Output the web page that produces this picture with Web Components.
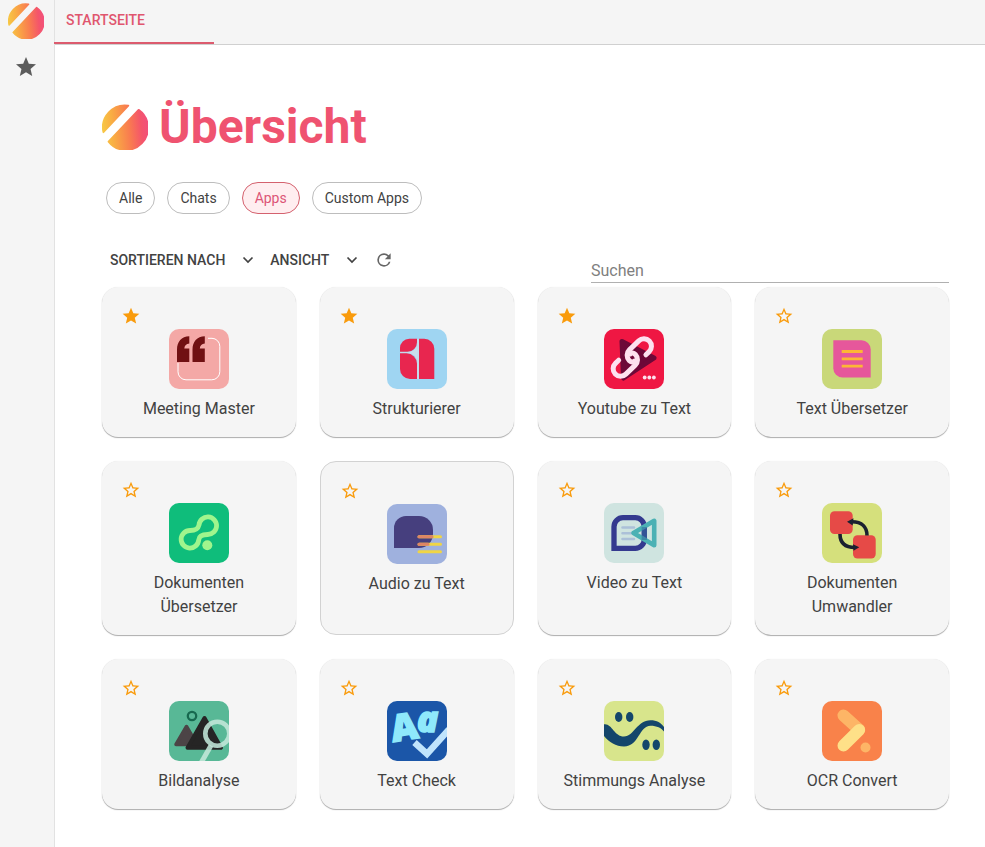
<!DOCTYPE html>
<html lang="de">
<head>
<meta charset="utf-8">
<title>Übersicht</title>
<style>
  html, body { margin: 0; min-height: 100%; }
  body { font-family: Roboto, "Liberation Sans", sans-serif; font-size: 16px; line-height: 24px; color: #424242; background: #fff; }
</style>
</head>
<body>
<app-shell>
  <side-bar slot="side"></side-bar>
  <tab-bar slot="top"><span>STARTSEITE</span></tab-bar>
  <page-title>Übersicht</page-title>
  <chip-row>
    <filter-chip>Alle</filter-chip>
    <filter-chip>Chats</filter-chip>
    <filter-chip selected>Apps</filter-chip>
    <filter-chip>Custom Apps</filter-chip>
  </chip-row>
  <tool-row>
    <menu-button>SORTIEREN NACH</menu-button>
    <menu-button>ANSICHT</menu-button>
    <refresh-button></refresh-button>
    <search-field slot="end" label="Suchen"></search-field>
  </tool-row>
  <card-grid>
    <app-card icon="meeting" favorite>Meeting Master</app-card>
    <app-card icon="struct" favorite>Strukturierer</app-card>
    <app-card icon="youtube" favorite>Youtube zu Text</app-card>
    <app-card icon="translate">Text Übersetzer</app-card>
    <app-card icon="docs">Dokumenten Übersetzer</app-card>
    <app-card icon="audio" outlined>Audio zu Text</app-card>
    <app-card icon="video">Video zu Text</app-card>
    <app-card icon="convert">Dokumenten Umwandler</app-card>
    <app-card icon="image">Bildanalyse</app-card>
    <app-card icon="check">Text Check</app-card>
    <app-card icon="mood">Stimmungs Analyse</app-card>
    <app-card icon="ocr">OCR Convert</app-card>
  </card-grid>
</app-shell>
<script>
const define = (name, render) => customElements.define(name, class extends HTMLElement {
  constructor() { super(); this.attachShadow({ mode: 'open' }); }
  connectedCallback() {
    this.shadowRoot.innerHTML = '<style>*{box-sizing:border-box}svg{display:block}button{font:inherit;color:inherit;background:none;border:0;padding:0;margin:0;cursor:pointer}</style>' + render(this);
  }
});

const STAR = 'M12 17.27 18.18 21l-1.64-7.03L22 9.24l-7.19-.61L12 2 9.19 8.63 2 9.24l5.46 4.73L5.82 21z';
const STAR_OUTLINE = 'M22 9.24l-7.19-.62L12 2 9.19 8.63 2 9.24l5.46 4.73L5.82 21 12 17.27 18.18 21l-1.63-7.03L22 9.24zM12 15.4l-3.76 2.27 1-4.28-3.32-2.88 4.38-.38L12 6.1l1.71 4.04 4.38.38-3.32 2.88 1 4.28L12 15.4z';

// Artwork of each app tile, on a 60 x 60 canvas: background colour, shapes clipped to the tile, lettering.
const ICONS = {
  meeting: ['#f4a8a6', `<path d="M39 9.3h4a8 8 0 0 1 7.8 8v25.500a8 8 0 0 1-8 8H17a8 8 0 0 1-8-8V34" fill="none" stroke="#fff" stroke-width="1"/>
    <g fill="#701012"><path d="M8 33V20.500C8 12.500 12.500 7.500 20.300 7.200v7.200c-3 .4-4.800 2-5 5h5V33z"/><path d="M23.500 33V20.500c0-8 4.500-13 12.300-13.300v7.200c-3 .4-4.800 2-5 5h5V33z"/></g>`],
  struct: ['#9fd5f2', `<path d="M20 23.500Q29 22.500 30.800 14V34Q29 24.500 20 23.500z" fill="#c9ddeb"/><path d="M13 23.500H25M31 10V50" stroke="#c4dcec" stroke-width="2"/>
    <g fill="#e8264f"><path d="M32 9.700h5.300a10 10 0 0 1 10 10V50H32z"/><path d="M13 22.700V19a9.300 9.300 0 0 1 9.300-9.300H30v3.500a9.500 9.500 0 0 1-9.500 9.500z"/><path d="M13 24.300h6.500A10.500 10.500 0 0 1 30 34.800V50h-7a10 10 0 0 1-10-10z"/></g>`],
  youtube: ['#ef1743', `<path d="M18 12.500 50 29 19.500 49z" fill="#6d0838" stroke="#6d0838" stroke-width="5" stroke-linejoin="round"/>
    <g transform="rotate(-44 28.300 28.500)" fill="none" stroke="#fde1ef" stroke-width="5" stroke-linecap="round"><path d="M40 36h4.500a7.500 7.500 0 0 0 0-15H31.500a7.500 7.500 0 0 0-7.500 7.500c0 2.500 1.500 4 3.300 4"/><path d="M16.600 21h-4.500a7.500 7.500 0 0 0 0 15h13a7.500 7.500 0 0 0 7.500-7.500c0-2.500-1.500-4-3.300-4"/></g>
    <g fill="#fde1ef"><circle cx="40.700" cy="48.500" r="1.900"/><circle cx="45.300" cy="48.500" r="1.900"/><circle cx="49.900" cy="48.500" r="1.900"/></g>`],
  translate: ['#c9d879', `<path d="M11.300 11.300h28.200a9.200 9.200 0 0 1 9.200 9.200v28H20.500a9.200 9.200 0 0 1-9.200-9.200z" fill="#e6579b"/><path d="M19.700 22.500h21M19.700 29.800h21M19.700 37.100h21" stroke="#fdb735" stroke-width="2.800"/>`],
  docs: ['#0fbd7b', `<path d="M30 22A8.800 8.800 0 1 1 38.700 31.500C33 31.500 30 33 29.700 37A8.800 8.800 0 1 1 21 27.500C26 27.500 29 26.500 30 22z" fill="none" stroke="#9ff58d" stroke-width="4.800"/><circle cx="38.300" cy="42.300" r="5" fill="#9ff58d"/>`],
  audio: ['#9fb1de', `<path d="M7 44V24a12 12 0 0 1 12-12h13a14 14 0 0 1 14 14v4a14 14 0 0 1-14 14z" fill="#463f7e"/>
    <g stroke-width="3" stroke-linecap="round"><path d="M32 32.700h21.500M32 40.300h21.500M32 47.700h21.500" stroke="#f0d544"/><path d="M32 32.700h13M32 40.300h9" stroke="#df8566"/></g>`],
  video: ['#cfe4e0', `<path d="M18.500 24.500H30M18.500 30.300H30M18.500 36H30" stroke="#abc0d8" stroke-width="2.600" stroke-linecap="round"/>
    <path d="M10 45.300V23.700a9 9 0 0 1 9-9h12.300a9 9 0 0 1 9 9v12.600a9 9 0 0 1-9 9z" fill="none" stroke="#343a8f" stroke-width="5.300"/>
    <path d="M29.500 30 50.200 17.800v24.400z" fill="none" stroke="#4bb1b4" stroke-width="4.600" stroke-linejoin="round"/><path d="M40.300 24v13" stroke="#33689c" stroke-width="5.300" opacity=".55"/>`],
  convert: ['#d5e07c', `<g fill="#e64a47"><rect x="8" y="8.300" width="22.700" height="22.700" rx="4.500"/><rect x="31" y="32.200" width="22.700" height="23.300" rx="4.500"/></g>
    <g fill="none" stroke="#1b2130" stroke-width="3.600"><path d="M45 32.500C45 24 40 18.800 30 18.800"/><path d="M18 31C18 39.500 23 44.500 33 44.500"/></g>
    <path d="M25 18.800 31.500 15.300 30.700 22.500z M37.300 44.300 31 41.300 31.500 47.700z" fill="#1b2130"/>`],
  image: ['#58b896', `<circle cx="23" cy="15" r="4.200" fill="none" stroke="#17694f" stroke-width="2.300"/>
    <path d="M7 43.500 17.500 25.500 28 43.500z" fill="#4c4446" stroke="#4c4446" stroke-width="3.500" stroke-linejoin="round"/><path d="M18.500 46.700 35.500 17 52 46.700z" fill="#262525" stroke="#262525" stroke-width="4" stroke-linejoin="round"/>
    <g fill="none" stroke="#c3e7da" stroke-opacity=".88"><circle cx="48.300" cy="32.700" r="12" stroke-width="4.600"/><path d="M42 44.500 32 62" stroke-width="5"/></g>`],
  check: ['#1b56a8', `<path d="M27.500 41.500 40 53 62 28.500" fill="none" stroke="#c0e4fc" stroke-width="6.500"/>`,
    `<g fill="#8fe9fb" stroke="#8fe9fb" stroke-width="1.500" font-family="Open Sans, sans-serif" font-weight="800"><text transform="translate(6 41) rotate(-9)" font-size="37">A</text><text x="30" y="31" font-size="35" font-style="italic">a</text></g>`],
  mood: ['#d8e58c', `<path d="M0 23.300C8 22 10 35.500 20 35.500S33 19.300 46.500 19.300C53 19.300 57 22 60 26V30.500C57 27 53 24.800 46.500 24.800 35 24.800 35 45.500 20 45.500 12 45.500 5 41 0 35z" fill="#14466b"/>
    <g fill="#14466b"><ellipse cx="14.700" cy="16" rx="3.700" ry="5"/><ellipse cx="25.700" cy="16" rx="3.700" ry="5"/><ellipse cx="42" cy="43.700" rx="3.700" ry="5.300"/><ellipse cx="52.300" cy="43.700" rx="3.700" ry="5.300"/></g>`],
  ocr: ['#f9824a', `<g fill="none" stroke-linecap="round" stroke-width="12"><path d="M21.500 14.500 37 28.500" stroke="#fdb566"/><path d="M37.200 29 21.500 44.500" stroke="#fee088"/></g><circle cx="43.500" cy="46.500" r="5" fill="#fdb566"/>`],
};

define('app-shell', () => `<style>
  :host{display:grid;grid-template-columns:55px minmax(0,1fr);grid-template-rows:45px auto;min-height:100vh}
  aside{grid-row:1 / 3;display:grid;background:#f5f5f5;border-right:1px solid #e2e2e2}
  header{display:grid}
  main{padding:54px 36px 24px 47px}
</style><aside><slot name="side"></slot></aside><header><slot name="top"></slot></header><main><slot></slot></main>`);

define('brand-mark', () => `<style>:host{display:block;width:46px}svg{width:100%}</style>
<svg viewBox="2 1 98 98" aria-hidden="true"><defs><linearGradient id="g" gradientUnits="userSpaceOnUse" x1="0" y1="55" x2="100" y2="45"><stop offset="0" stop-color="#f7cb45"/><stop offset=".25" stop-color="#f9ad43"/><stop offset=".6" stop-color="#f97b50"/><stop offset=".85" stop-color="#f4556b"/><stop offset="1" stop-color="#f2507c"/></linearGradient></defs>
<g fill="url(#g)" stroke="url(#g)" stroke-width="4" stroke-linejoin="round"><path d="M5 61A47 47 0 0 1 58 4.500Z"/><path d="M16 81A47 47 0 1 0 80 13.500Z"/></g></svg>`);

define('side-bar', () => `<style>
  :host{display:flex;flex-direction:column;align-items:center;padding:3px 2px 0 0;gap:16px}
  nav{display:contents}a{display:block}brand-mark{width:36px}svg{width:24px;fill:#5c5c5c}
</style><nav><a href="#" aria-label="Startseite"><brand-mark></brand-mark></a><a href="#favoriten" aria-label="Favoriten"><svg viewBox="0 0 24 24"><path d="${STAR}"/></svg></a></nav>`);

define('tab-bar', () => `<style>
  :host{display:flex;background:#f5f5f5;border-bottom:1px solid #d0d0d0}
  button{width:160px;padding:0 12px 2px;margin-left:-1px;text-align:left;font-size:14px;font-weight:500;color:#e0566e;border-bottom:2px solid #dc5b6e}
</style><button role="tab" aria-selected="true"><slot></slot></button>`);

define('page-title', () => `<style>
  :host{display:flex;align-items:center;gap:11px;margin-bottom:27px}
  h1{margin:0;font-size:48px;line-height:56px;font-weight:700;color:#ef5370}
</style><brand-mark></brand-mark><h1><slot></slot></h1>`);

define('chip-row', () => `<style>:host{display:flex;flex-wrap:wrap;gap:12px;padding-left:4px;margin-bottom:29px}</style><slot></slot>`);

define('filter-chip', el => `<style>
  :host{display:block}
  button{height:32px;padding:0 12px;border:1px solid #bdbdbd;border-radius:16px;font-size:14px;line-height:20px}
  :host([selected]) button{color:#dc5577;background:#ffeef0;border-color:#d4616e}
</style><button aria-pressed="${el.hasAttribute('selected')}"><slot></slot></button>`);

define('tool-row', () => `<style>
  :host{display:flex;justify-content:space-between;gap:24px;padding-left:8px;margin-bottom:4px}
  div{display:flex;align-self:flex-start;gap:16px;height:34px}
  slot[name=end]::slotted(*){flex:0 1 358px}
</style><div><slot></slot></div><slot name="end"></slot>`);

define('menu-button', () => `<style>
  :host{display:flex}
  button{display:flex;align-items:center;gap:17px;font-size:14px;font-weight:500}
  svg{width:12px;fill:none;stroke:#424242;stroke-width:1.7}
</style><button aria-haspopup="menu"><slot></slot><svg viewBox="0 0 12 12"><path d="M1.500 3.500 6 8l4.500-4.500"/></svg></button>`);

define('refresh-button', () => `<style>
  :host{display:flex}svg{width:20px;fill:#666}
</style><button aria-label="Aktualisieren"><svg viewBox="0 0 24 24"><path d="M17.650 6.350A7.958 7.958 0 0 0 12 4a8 8 0 1 0 7.730 10h-2.080A6 6 0 1 1 12 6c1.660 0 3.140.690 4.220 1.780L13 11h7V4z"/></svg></button>`);

define('search-field', el => `<style>
  :host{display:block}
  input{display:block;width:100%;height:40px;padding:15px 0 0;border:0;border-bottom:1px solid #b0b0b0;border-radius:0;outline:0;background:none;font:inherit;color:inherit}
  input::placeholder{color:#808080;opacity:1}
</style><input type="search" placeholder="${el.getAttribute('label')}" aria-label="${el.getAttribute('label')}">`);

define('card-grid', () => `<style>:host{display:grid;grid-template-columns:repeat(4,minmax(0,1fr));gap:24px}</style><slot></slot>`);

define('app-icon', el => {
  const [bg, art, lettering = ''] = ICONS[el.getAttribute('name')];
  return `<style>:host{display:block;width:60px;height:60px}svg{overflow:visible}</style><svg viewBox="0 0 60 60" aria-hidden="true"><clipPath id="tile"><rect width="60" height="60" rx="10"/></clipPath><rect width="60" height="60" rx="10" fill="${bg}"/>${lettering}<g clip-path="url(#tile)">${art}</g></svg>`;
});

define('app-card', el => {
  const fav = el.hasAttribute('favorite');
  return `<style>
  :host{display:flex;flex-direction:column;align-items:center;box-sizing:border-box;padding:19px 19px 16px;border-radius:16px;background:#f5f5f5;box-shadow:0 1px 1px rgba(0,0,0,.32),0 0 1px rgba(0,0,0,.1)}
  :host([outlined]){border:1px solid #d2d2d2;box-shadow:none}
  .fav{align-self:flex-start;margin-bottom:3px}
  .fav svg{width:20px;fill:#f99b0c}
  .open{display:flex;flex-direction:column;align-items:center;gap:8px;color:inherit;text-decoration:none;text-align:center}
</style><button class="fav" aria-label="Favorit" aria-pressed="${fav}"><svg viewBox="0 0 24 24"><path d="${fav ? STAR : STAR_OUTLINE}"/></svg></button>
<a class="open" href="#${el.getAttribute('icon')}"><app-icon name="${el.getAttribute('icon')}"></app-icon><span><slot></slot></span></a>`;
});
</script>
</body>
</html>
